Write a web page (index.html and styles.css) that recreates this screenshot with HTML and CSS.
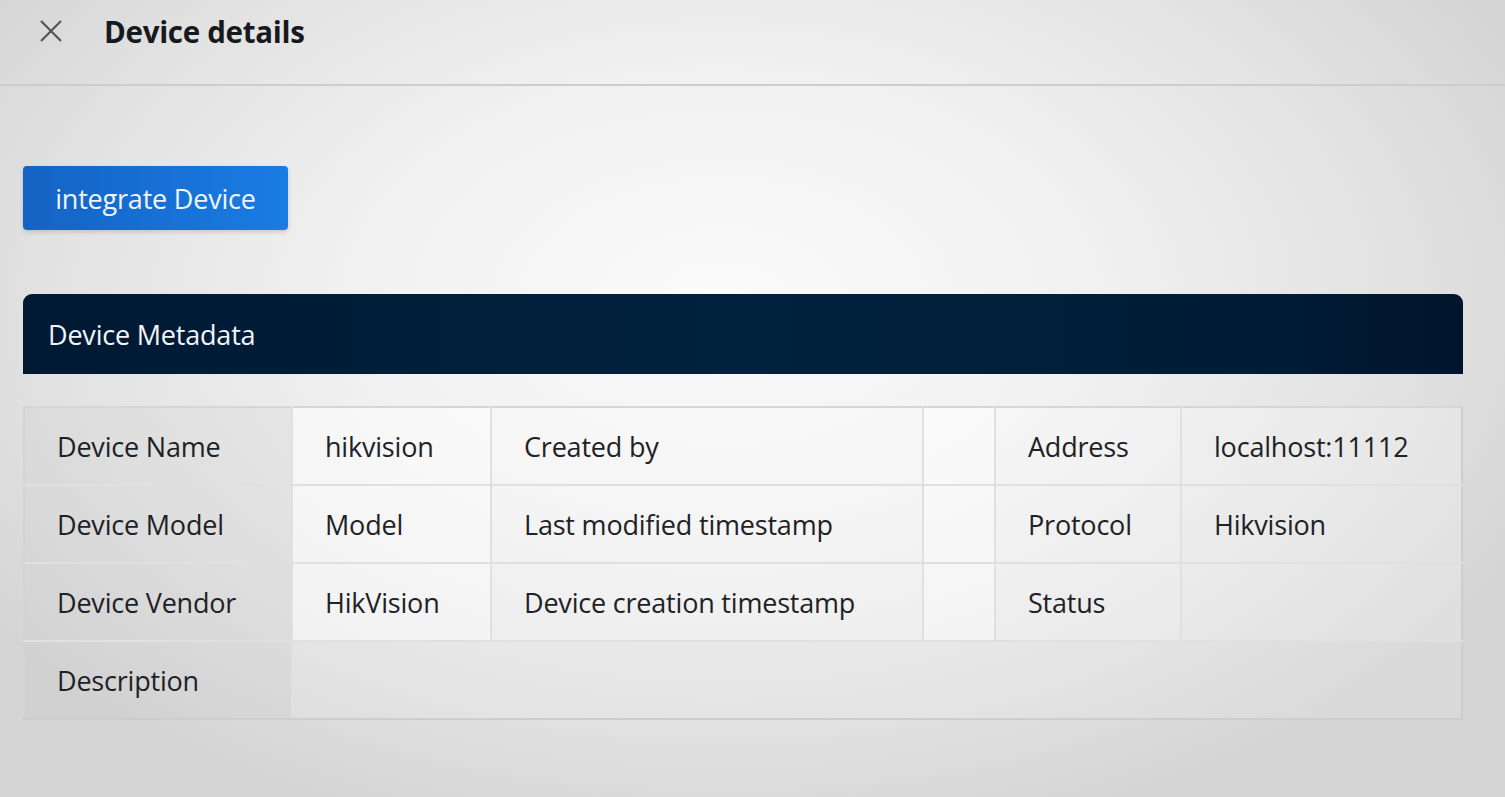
FILE: index.html
```html
<!DOCTYPE html>
<html>
<head>
<meta charset="utf-8">
<link rel="stylesheet" href="styles.css">
</head>
<body>
<header class="topbar">
  <svg class="close" width="24" height="24" viewBox="0 0 24 24"><path d="M2 2 L22 22 M22 2 L2 22" stroke="#555" stroke-width="2.2" fill="none"/></svg>
  <h1 class="title">Device details</h1>
</header>
<main class="content">
  <button class="btn">integrate Device</button>
  <section class="card">
    <div class="card-head">Device Metadata</div>
    <table class="meta">
      <colgroup>
        <col style="width:268px"><col style="width:199px"><col style="width:432px"><col style="width:72px"><col style="width:186px"><col>
      </colgroup>
      <tr><td class="lbl">Device Name</td><td class="val">hikvision</td><td class="lbl2">Created by</td><td class="val"></td><td class="lbl2">Address</td><td class="val2">localhost:11112</td></tr>
      <tr><td class="lbl">Device Model</td><td class="val">Model</td><td class="lbl2">Last modified timestamp</td><td class="val"></td><td class="lbl2">Protocol</td><td class="val2">Hikvision</td></tr>
      <tr><td class="lbl">Device Vendor</td><td class="val">HikVision</td><td class="lbl2">Device creation timestamp</td><td class="val"></td><td class="lbl2">Status</td><td class="val2"></td></tr>
      <tr><td class="lbl">Description</td><td class="desc" colspan="5"></td></tr>
    </table>
  </section>
</main>
</body>
</html>
```
FILE: styles.css
```css
html, body {
  margin: 0;
  height: 100%;
}
body {
  font-family: "Open Sans", "Noto Sans", sans-serif;
  color: #1e2226;
  background: radial-gradient(ellipse 60% 70% at 48% 38%, #fbfbfb 0%, #f1f1f1 40%, #e2e2e2 75%, #d4d4d4 100%);
  overflow: hidden;
}
.topbar {
  height: 86px;
  box-sizing: border-box;
  border-bottom: 2px solid #cdcdcd;
  display: flex;
  align-items: center;
  padding-left: 39px;
  padding-bottom: 22px;
}
.close { display: block; }
.title {
  margin: 0 0 0 41px;
  font-size: 29.5px;
  font-weight: 700;
  color: #161a1e;
  letter-spacing: -0.3px;
}
.content {
  padding: 80px 42px 0 23px;
}
.btn {
  display: block;
  width: 265px;
  height: 64px;
  border: none;
  border-radius: 4px;
  background: linear-gradient(90deg, #1463c4 0%, #1a7ce4 100%);
  color: #eef5ff;
  font-family: "Open Sans", "Noto Sans", sans-serif;
  font-size: 27px;
  box-shadow: 0 2px 4px rgba(0,0,0,0.15);
  padding: 0;
  letter-spacing: -0.2px;
}
.card { margin-top: 64px; }
.card-head {
  height: 80px;
  box-sizing: border-box;
  border-radius: 9px 9px 0 0;
  background: linear-gradient(90deg, #001933 0%, #00223f 50%, #001c36 85%, #00152b 100%);
  color: #f2f5f8;
  font-size: 27px;
  display: flex;
  align-items: center;
  padding-left: 25px;
  letter-spacing: -0.2px;
}
.meta {
  margin-top: 32px;
  width: 1440px;
  border-collapse: collapse;
  table-layout: fixed;
  font-size: 27px;
  letter-spacing: -0.2px;
}
.meta td {
  height: 78px;
  box-sizing: border-box;
  border: 2px solid #e0e0e0;
  padding: 0 0 0 32px;
  white-space: nowrap;
}
.meta tr:first-child td { border-top-color: #d6d6d6; }
.meta tr:last-child td { border-bottom-color: #cdcdcd; }
.meta td:first-child { border-left-color: #d3d3d3; }
.meta td:last-child { border-right-color: #cdcdcd; }
.meta .lbl { background: rgba(200,200,200,0.18); }
.meta .val { background: rgba(255,255,255,0.55); }
.meta .lbl2 { background: rgba(255,255,255,0.3); }
.meta .val2 { background: rgba(255,255,255,0.25); }
.meta .desc { background: rgba(240,240,240,0.2); }
```
